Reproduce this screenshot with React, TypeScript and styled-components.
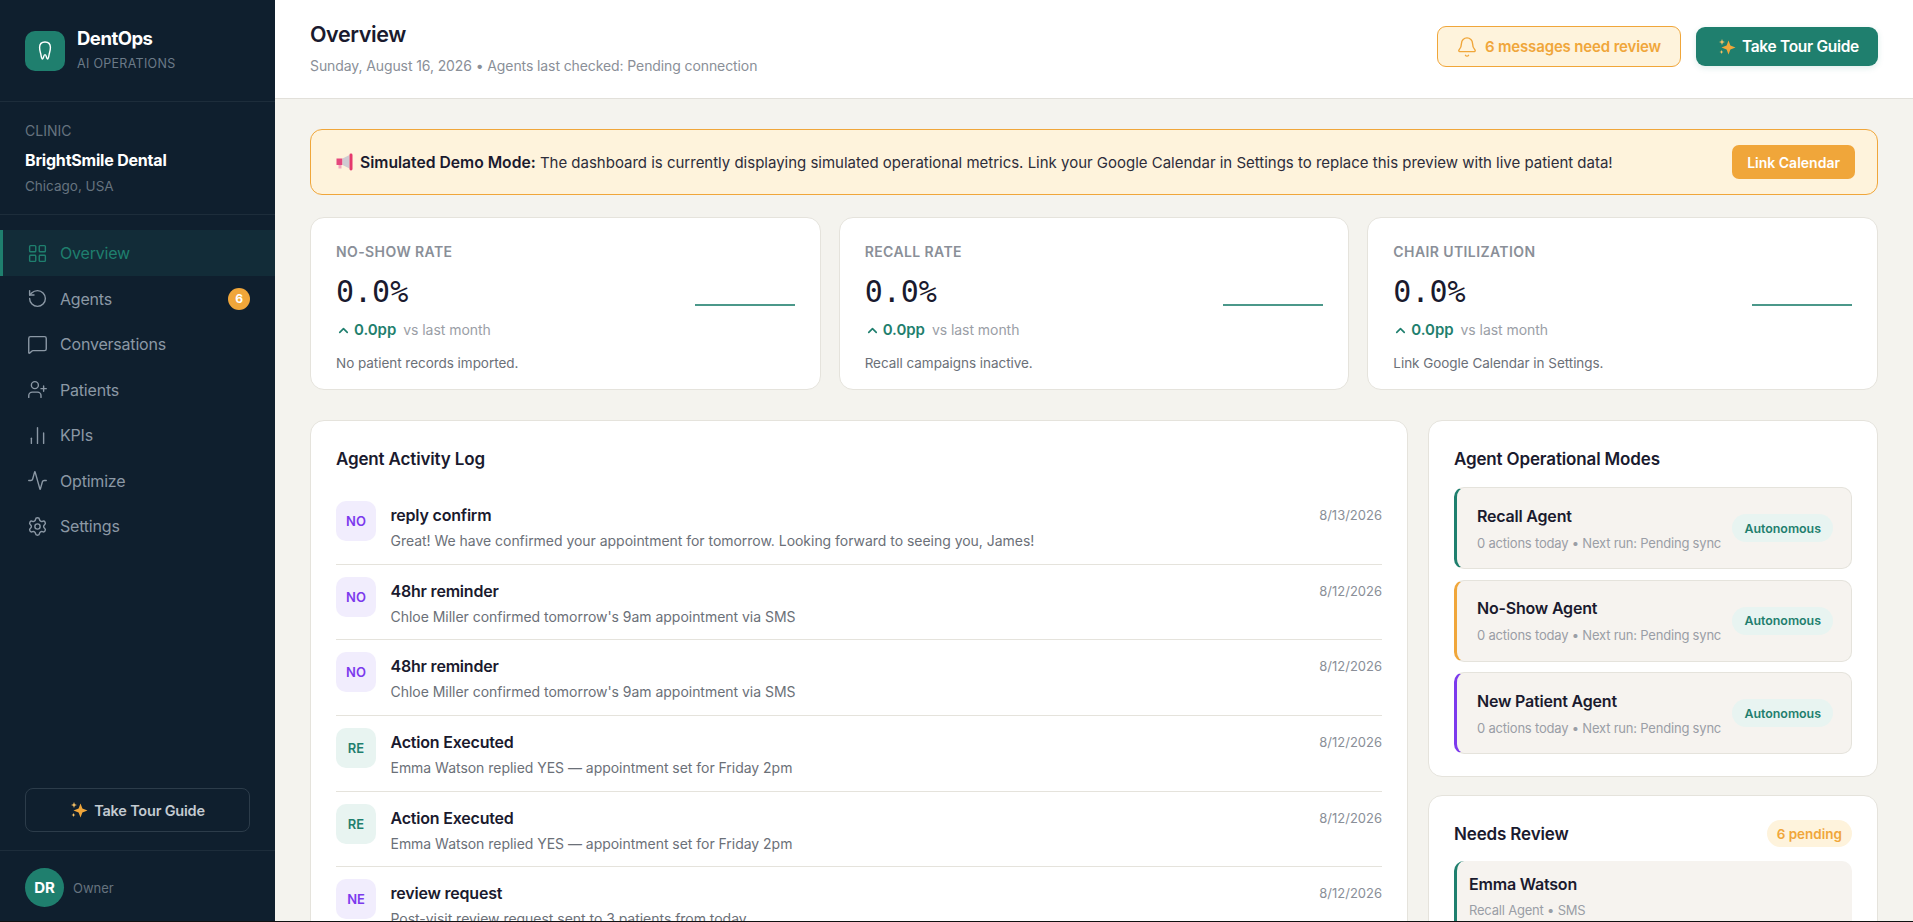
import {
  Activity,
  Bell,
  ChartNoAxesColumn,
  ChevronUp,
  LayoutGrid,
  MessageSquare,
  RotateCcw,
  Settings,
  UserPlus,
} from 'lucide-react';
import styled, { createGlobalStyle } from 'styled-components';

const GlobalStyle = createGlobalStyle`
  html, body {
    margin: 0;
    padding: 0;
    background: #111;
    overflow: hidden;
  }
  * {
    box-sizing: border-box;
  }
`;

const Shell = styled.div`
  display: grid;
  grid-template-columns: 275px 1fr;
  height: 921px;
  overflow: hidden;
  font-family: Inter, 'Liberation Sans', sans-serif;
  color: #1a1a2e;
`;

const Sidebar = styled.aside`
  background: #0f1f2e;
  display: flex;
  flex-direction: column;
  min-height: 0;
`;

const Brand = styled.div`
  height: 102px;
  padding: 0 25px;
  display: flex;
  align-items: center;
  gap: 12px;
  border-bottom: 1px solid #1d2d3b;
`;

const LogoBox = styled.div`
  width: 40px;
  height: 40px;
  border-radius: 10px;
  background: #1f7f6e;
  display: flex;
  align-items: center;
  justify-content: center;
`;

const BrandName = styled.div`
  color: #fff;
  font-size: 18.5px;
  font-weight: 700;
  letter-spacing: -0.5px;
  line-height: 22px;
  margin-top: -1px;
`;

const BrandSub = styled.div`
  color: #6b7a88;
  font-size: 12.5px;
  letter-spacing: 0.3px;
  line-height: 18px;
  margin-top: 6px;
`;

const ClinicBlock = styled.div`
  height: 113px;
  padding: 20px 25px 0;
  border-bottom: 1px solid #1d2d3b;
`;

const ClinicLabel = styled.div`
  color: #66737f;
  font-size: 14px;
  line-height: 18px;
`;

const ClinicName = styled.div`
  color: #fff;
  font-size: 16px;
  font-weight: 700;
  letter-spacing: -0.2px;
  line-height: 24px;
  margin-top: 8px;
`;

const ClinicCity = styled.div`
  color: #66737f;
  font-size: 13.5px;
  line-height: 22px;
  margin-top: 3px;
`;

const Nav = styled.nav`
  flex: 1;
  padding-top: 15px;
`;

const NavItem = styled.div<{ $active?: boolean }>`
  height: 45.5px;
  padding: 1px 25px 0 ${(p) => (p.$active ? '24px' : '27px')};
  display: flex;
  align-items: center;
  gap: 12px;
  font-size: 16px;
  letter-spacing: -0.2px;
  color: ${(p) => (p.$active ? '#1f7f6e' : '#8b98a5')};
  background: ${(p) => (p.$active ? '#122c38' : 'transparent')};
  border-left: ${(p) => (p.$active ? '3px solid #1f7f6e' : 'none')};
`;

const NavLabel = styled.span`
  flex: 1;
`;

const NavBadge = styled.span`
  width: 22px;
  height: 22px;
  border-radius: 50%;
  background: #f0a63a;
  color: #fff;
  font-size: 12px;
  font-weight: 700;
  display: flex;
  align-items: center;
  justify-content: center;
`;

const SideTour = styled.div`
  padding: 0 25px 18px;
  border-bottom: 1px solid #1d2d3b;
`;

const GhostButton = styled.button`
  width: 100%;
  height: 44px;
  border: 1px solid #2c3c4a;
  border-radius: 8px;
  background: transparent;
  color: #c3cad1;
  font-family: inherit;
  font-size: 14.5px;
  font-weight: 600;
  letter-spacing: -0.2px;
  display: flex;
  align-items: center;
  justify-content: center;
  gap: 6px;
`;

const UserRow = styled.div`
  height: 70px;
  padding: 3px 25px 0;
  display: flex;
  align-items: center;
  gap: 9px;
  color: #66737f;
  font-size: 13px;
`;

const Avatar = styled.div`
  width: 39px;
  height: 39px;
  border-radius: 50%;
  background: #1f7f6e;
  color: #fff;
  font-size: 15px;
  font-weight: 700;
  display: flex;
  align-items: center;
  justify-content: center;
`;

const Main = styled.main`
  display: flex;
  flex-direction: column;
  min-width: 0;
  min-height: 0;
  background: #f4f3ee;
`;

const TopBar = styled.header`
  height: 99px;
  flex-shrink: 0;
  background: #fff;
  border-bottom: 1px solid #e2e0da;
  padding: 0 35px 3px;
  display: flex;
  align-items: center;
  justify-content: space-between;
`;

const PageTitle = styled.h1`
  margin: 0;
  font-size: 21.5px;
  font-weight: 600;
  letter-spacing: -0.4px;
  line-height: 30px;
`;

const PageSub = styled.div`
  margin-top: 7px;
  font-size: 14px;
  letter-spacing: -0.1px;
  color: #8a8f98;
  line-height: 20px;
`;

const TopActions = styled.div`
  display: flex;
  align-items: center;
  gap: 15px;
  margin-bottom: 2px;
`;

const ReviewPill = styled.div`
  height: 41px;
  padding: 0 19px 0 18px;
  border: 1px solid #f0a63a;
  border-radius: 9px;
  background: #fef3dc;
  color: #f0a63a;
  font-size: 15px;
  font-weight: 600;
  letter-spacing: -0.15px;
  display: flex;
  align-items: center;
  gap: 7px;
`;

const TourButton = styled.button`
  height: 39px;
  padding: 0 19px 0 22px;
  border: none;
  border-radius: 9px;
  background: #1f7f6e;
  color: #fff;
  font-family: inherit;
  font-size: 15.5px;
  font-weight: 600;
  letter-spacing: -0.3px;
  display: flex;
  align-items: center;
  gap: 6px;
  box-shadow: 0 2px 6px rgba(31, 127, 110, 0.14);
`;

const Content = styled.div`
  flex: 1;
  min-height: 0;
  overflow: hidden;
  padding: 30px 35px 0;
  display: flex;
  flex-direction: column;
  gap: 22px;
`;

const Banner = styled.div`
  height: 66px;
  flex-shrink: 0;
  padding: 0 22px 0 25px;
  border: 1px solid #f0a63a;
  border-radius: 12px;
  background: #fef3dc;
  display: flex;
  align-items: center;
  justify-content: space-between;
  font-size: 15px;
  letter-spacing: -0.01px;
  color: #2d2d3a;
`;

const BannerText = styled.div`
  display: flex;
  align-items: center;
  gap: 6px;
  white-space: nowrap;

  strong {
    font-size: 15.7px;
    font-weight: 600;
    color: #1a1a2e;
  }
`;

const LinkButton = styled.button`
  height: 34px;
  padding: 0 15px;
  border: none;
  border-radius: 7px;
  background: #f0a63a;
  color: #fff;
  font-family: inherit;
  font-size: 14px;
  font-weight: 600;
`;

const KpiGrid = styled.div`
  flex-shrink: 0;
  display: grid;
  grid-template-columns: repeat(3, 1fr);
  gap: 18px;
`;

const Card = styled.section`
  background: #fff;
  border: 1px solid #e5e3dc;
  border-radius: 14px;
`;

const KpiCard = styled(Card)`
  height: 173px;
  padding: 24px 25px 0;
`;

const KpiLabel = styled.div`
  color: #8a8f98;
  font-size: 14px;
  font-weight: 600;
  letter-spacing: 0.4px;
  line-height: 20px;
`;

const KpiMiddle = styled.div`
  display: flex;
  justify-content: space-between;
  align-items: flex-end;
  margin-top: 10px;
`;

const KpiValue = styled.div`
  font-family: 'DejaVu Sans Mono', 'Liberation Mono', monospace;
  font-size: 30px;
  line-height: 40px;
`;

const Spark = styled.svg`
  width: 100px;
  height: 24px;
  margin-bottom: -5px;
`;

const KpiDelta = styled.div`
  display: flex;
  align-items: center;
  gap: 3px;
  margin-top: 7px;
  line-height: 22px;
  font-size: 14px;
  letter-spacing: -0.05px;
  color: #9a9ea6;
`;

const DeltaValue = styled.span`
  color: #1f7f6e;
  font-size: 15px;
  font-weight: 600;
  margin-right: 4px;
`;

const KpiNote = styled.div`
  margin-top: 13px;
  font-size: 13.5px;
  letter-spacing: -0.04px;
  color: #6b7078;
  line-height: 18px;
`;

const Columns = styled.div`
  flex-shrink: 0;
  margin-top: 8px;
  display: grid;
  grid-template-columns: 1fr 450px;
  gap: 20px;
  align-items: start;
`;

const Stack = styled.div`
  display: flex;
  flex-direction: column;
  gap: 18px;
`;

const PanelPad = styled(Card)`
  padding: 25px 25px 21.5px;
`;

const PanelHead = styled.div<{ $gap: number }>`
  display: flex;
  align-items: center;
  justify-content: space-between;
  height: 26px;
  margin-bottom: ${(p) => p.$gap}px;
`;

const PanelTitle = styled.h2`
  margin: 0;
  font-size: 17px;
  font-weight: 600;
  letter-spacing: -0.15px;
  line-height: 26px;
`;

const LogRow = styled.div`
  display: flex;
  align-items: flex-start;
  gap: 14.5px;
  padding: 12px 0;
  border-bottom: 1px solid #e5e3dc;
  height: 75.7px;
`;

const LogBadge = styled.div<{ $kind: 'no' | 're' }>`
  width: 40px;
  height: 40px;
  flex-shrink: 0;
  border-radius: 10px;
  font-size: 13px;
  font-weight: 600;
  display: flex;
  align-items: center;
  justify-content: center;
  color: ${(p) => (p.$kind === 're' ? '#1f7f6e' : '#7c3aed')};
  background: ${(p) => (p.$kind === 're' ? '#e8f4f1' : '#f1edfd')};
`;

const LogBody = styled.div`
  flex: 1;
  min-width: 0;
`;

const LogTitle = styled.div`
  margin-top: 2px;
  font-size: 16px;
  font-weight: 600;
  letter-spacing: -0.2px;
  line-height: 24px;
`;

const LogText = styled.div`
  margin-top: 3px;
  font-size: 14px;
  letter-spacing: -0.03px;
  color: #6b7078;
  line-height: 22px;
`;

const LogDate = styled.div`
  margin-top: 2px;
  font-size: 13px;
  color: #8a8f98;
  line-height: 24px;
`;

const ModeRow = styled.div<{ $color: string }>`
  height: 82px;
  margin-bottom: 10.5px;
  padding: 0 18px 0 20px;
  background: #f6f3ef;
  border: 1px solid #e5e3dc;
  border-left: 3px solid ${(p) => p.$color};
  border-radius: 10px;
  display: flex;
  align-items: center;
  justify-content: space-between;

  &:last-child {
    margin-bottom: 0;
  }
`;

const RowName = styled.div`
  font-size: 16px;
  font-weight: 600;
  letter-spacing: -0.2px;
  line-height: 24px;
`;

const RowMeta = styled.div`
  margin-top: 5px;
  font-size: 13px;
  letter-spacing: -0.2px;
  color: #9a9ea6;
  line-height: 20px;
`;

const ModeTag = styled.span`
  height: 28px;
  padding: 0 12px;
  border-radius: 14px;
  background: #e8f4f1;
  color: #1f7f6e;
  font-size: 12.4px;
  font-weight: 600;
  display: flex;
  align-items: center;
`;

const PendingTag = styled.span`
  height: 27px;
  padding: 0 10px;
  border-radius: 14px;
  background: #fef3dc;
  color: #f0a63a;
  font-size: 13.5px;
  font-weight: 600;
  display: flex;
  align-items: center;
`;

const ReviewItem = styled.div`
  padding: 11px 12px;
  background: #f6f3ef;
  border-left: 3px solid #1f7f6e;
  border-radius: 10px;

  ${RowMeta} {
    margin-top: 4px;
  }
`;

const Tooth = () => (
  <svg width="14" height="20" viewBox="0 0 14 20" fill="none" stroke="#fff" strokeWidth="1.4" strokeLinecap="round" strokeLinejoin="round">
    <path d="M7 1C3.6 1 1.6 3.2 1.6 6.6c0 3 .9 5 1.3 7 .3 1.8.6 4.4 1.6 4.4 1.2 0 .9-4.4 2.5-4.4s1.3 4.4 2.5 4.4c1 0 1.3-2.6 1.6-4.4.4-2 1.3-4 1.3-7C12.4 3.2 10.4 1 7 1Z" />
  </svg>
);

const Sparkles = () => (
  <svg width="18" height="18" viewBox="0 0 18 18">
    <path d="M10.5 2.5 12.4 7.6 17.5 9.5 12.4 11.4 10.5 16.5 8.6 11.4 3.5 9.5 8.6 7.6Z" fill="#f0a63a" />
    <path d="M4 1 4.8 3.2 7 4 4.8 4.8 4 7 3.2 4.8 1 4 3.2 3.2Z" fill="#f7c266" />
    <path d="M3.5 12 4.1 13.4 5.5 14 4.1 14.6 3.5 16 2.9 14.6 1.5 14 2.9 13.4Z" fill="#f7c266" />
  </svg>
);

const Megaphone = () => (
  <svg width="18" height="18" viewBox="0 0 18 18">
    <rect x="0.5" y="5.5" width="6" height="6.5" fill="#e5487d" />
    <path d="M6.5 5.5 13.5 2V15.5L6.5 12Z" fill="#cfcbd2" />
    <rect x="13.5" y="0.5" width="3" height="17" rx="1.4" fill="#e5386d" />
    <rect x="2.5" y="12" width="3" height="3.5" fill="#f3a5bd" />
  </svg>
);

const navItems = [
  { label: 'Overview', icon: LayoutGrid, active: true },
  { label: 'Agents', icon: RotateCcw, badge: 6 },
  { label: 'Conversations', icon: MessageSquare },
  { label: 'Patients', icon: UserPlus },
  { label: 'KPIs', icon: ChartNoAxesColumn },
  { label: 'Optimize', icon: Activity },
  { label: 'Settings', icon: Settings },
];

const kpis = [
  { label: 'NO-SHOW RATE', note: 'No patient records imported.' },
  { label: 'RECALL RATE', note: 'Recall campaigns inactive.' },
  { label: 'CHAIR UTILIZATION', note: 'Link Google Calendar in Settings.' },
];

const logs: { tag: string; kind: 'no' | 're'; title: string; text: string; date: string }[] = [
  { tag: 'NO', kind: 'no', title: 'reply confirm', text: 'Great! We have confirmed your appointment for tomorrow. Looking forward to seeing you, James!', date: '8/13/2026' },
  { tag: 'NO', kind: 'no', title: '48hr reminder', text: "Chloe Miller confirmed tomorrow's 9am appointment via SMS", date: '8/12/2026' },
  { tag: 'NO', kind: 'no', title: '48hr reminder', text: "Chloe Miller confirmed tomorrow's 9am appointment via SMS", date: '8/12/2026' },
  { tag: 'RE', kind: 're', title: 'Action Executed', text: 'Emma Watson replied YES — appointment set for Friday 2pm', date: '8/12/2026' },
  { tag: 'RE', kind: 're', title: 'Action Executed', text: 'Emma Watson replied YES — appointment set for Friday 2pm', date: '8/12/2026' },
  { tag: 'NE', kind: 'no', title: 'review request', text: 'Post-visit review request sent to 3 patients from today', date: '8/12/2026' },
];

const modes = [
  { name: 'Recall Agent', color: '#1f7f6e' },
  { name: 'No-Show Agent', color: '#f0a63a' },
  { name: 'New Patient Agent', color: '#7c3aed' },
];

export default function App() {
  return (
    <>
      <GlobalStyle />
      <Shell>
        <Sidebar>
          <Brand>
            <LogoBox>
              <Tooth />
            </LogoBox>
            <div>
              <BrandName>DentOps</BrandName>
              <BrandSub>AI OPERATIONS</BrandSub>
            </div>
          </Brand>
          <ClinicBlock>
            <ClinicLabel>CLINIC</ClinicLabel>
            <ClinicName>BrightSmile Dental</ClinicName>
            <ClinicCity>Chicago, USA</ClinicCity>
          </ClinicBlock>
          <Nav>
            {navItems.map((item) => (
              <NavItem key={item.label} $active={item.active}>
                <item.icon size={21} strokeWidth={1.6} />
                <NavLabel>{item.label}</NavLabel>
                {item.badge && <NavBadge>{item.badge}</NavBadge>}
              </NavItem>
            ))}
          </Nav>
          <SideTour>
            <GhostButton>
              <Sparkles />
              Take Tour Guide
            </GhostButton>
          </SideTour>
          <UserRow>
            <Avatar>DR</Avatar>
            Owner
          </UserRow>
        </Sidebar>
        <Main>
          <TopBar>
            <div>
              <PageTitle>Overview</PageTitle>
              <PageSub>Sunday, August 16, 2026 • Agents last checked: Pending connection</PageSub>
            </div>
            <TopActions>
              <ReviewPill>
                <Bell size={22} strokeWidth={1.5} />
                6 messages need review
              </ReviewPill>
              <TourButton>
                <Sparkles />
                Take Tour Guide
              </TourButton>
            </TopActions>
          </TopBar>
          <Content>
            <Banner>
              <BannerText>
                <Megaphone />
                <span>
                  <strong>Simulated Demo Mode:</strong> The dashboard is currently displaying simulated operational metrics. Link your Google Calendar in Settings to replace this preview with live patient data!
                </span>
              </BannerText>
              <LinkButton>Link Calendar</LinkButton>
            </Banner>
            <KpiGrid>
              {kpis.map((kpi) => (
                <KpiCard key={kpi.label}>
                  <KpiLabel>{kpi.label}</KpiLabel>
                  <KpiMiddle>
                    <KpiValue>0.0%</KpiValue>
                    <Spark viewBox="0 0 100 24">
                      <line x1="0" y1="12" x2="100" y2="12" stroke="#1f7f6e" strokeWidth="2" opacity="0.8" />
                    </Spark>
                  </KpiMiddle>
                  <KpiDelta>
                    <ChevronUp size={15} strokeWidth={2.6} color="#1f7f6e" />
                    <DeltaValue>0.0pp</DeltaValue>
                    vs last month
                  </KpiDelta>
                  <KpiNote>{kpi.note}</KpiNote>
                </KpiCard>
              ))}
            </KpiGrid>
            <Columns>
              <PanelPad>
                <PanelHead $gap={17}>
                  <PanelTitle>Agent Activity Log</PanelTitle>
                </PanelHead>
                {logs.map((log, i) => (
                  <LogRow key={i}>
                    <LogBadge $kind={log.kind}>{log.tag}</LogBadge>
                    <LogBody>
                      <LogTitle>{log.title}</LogTitle>
                      <LogText>{log.text}</LogText>
                    </LogBody>
                    <LogDate>{log.date}</LogDate>
                  </LogRow>
                ))}
              </PanelPad>
              <Stack>
                <PanelPad>
                  <PanelHead $gap={15}>
                    <PanelTitle>Agent Operational Modes</PanelTitle>
                  </PanelHead>
                  {modes.map((mode) => (
                    <ModeRow key={mode.name} $color={mode.color}>
                      <div>
                        <RowName>{mode.name}</RowName>
                        <RowMeta>0 actions today • Next run: Pending sync</RowMeta>
                      </div>
                      <ModeTag>Autonomous</ModeTag>
                    </ModeRow>
                  ))}
                </PanelPad>
                <PanelPad>
                  <PanelHead $gap={14}>
                    <PanelTitle>Needs Review</PanelTitle>
                    <PendingTag>6 pending</PendingTag>
                  </PanelHead>
                  <ReviewItem>
                    <RowName>Emma Watson</RowName>
                    <RowMeta>Recall Agent • SMS</RowMeta>
                  </ReviewItem>
                </PanelPad>
              </Stack>
            </Columns>
          </Content>
        </Main>
      </Shell>
    </>
  );
}
